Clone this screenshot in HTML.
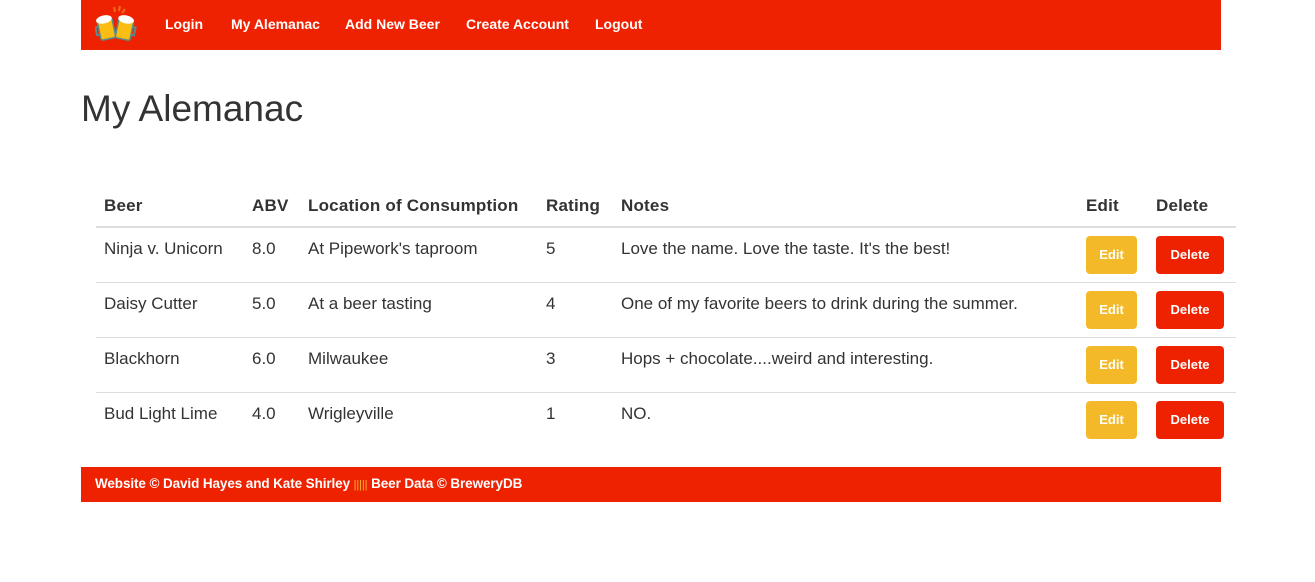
<!DOCTYPE html>
<html><head><meta charset="utf-8"><style>
*{margin:0;padding:0;box-sizing:border-box}
body{width:1315px;height:582px;background:#fff;font-family:"Liberation Sans","DejaVu Sans",sans-serif;color:#333;position:relative;overflow:hidden}
.nav{position:absolute;left:81px;top:0;width:1140px;height:50px;background:#ee2201}
.nav a{position:absolute;top:16px;color:#fff;font-size:14px;font-weight:bold;text-decoration:none}
h1{position:absolute;left:81px;top:88px;font-size:37px;font-weight:normal;color:#333}
.t{position:absolute;font-size:17px;white-space:nowrap}
.b{font-weight:bold;letter-spacing:0.2px}
.line{position:absolute;left:96px;width:1140px;height:1px;background:#ddd}
.btn{position:absolute;height:38px;border-radius:4px;color:#fff;font-size:13px;font-weight:bold;text-align:center;line-height:38px}
.e{background:#f3b929;left:1086px;width:51px}
.d{background:#ee2201;left:1156px;width:68px}
.foot{position:absolute;left:81px;top:467px;width:1140px;height:35px;background:#ee2201;color:#fff;font-size:13.5px;font-weight:bold;padding:9px 0 0 14px;letter-spacing:-0.1px}
</style></head><body>
<div class="nav">
<svg style="position:absolute;left:14px;top:5px" width="42" height="38" viewBox="0 0 42 38">
<g stroke="#f06a1a" stroke-width="2"><line x1="19" y1="2" x2="20" y2="7"/><line x1="25" y1="1" x2="24" y2="6"/><line x1="30" y1="4" x2="27" y2="8"/></g>
<g transform="rotate(-12 12 24)"><rect x="4" y="14" width="15" height="20" rx="2" fill="#fbbd12" stroke="#5a8a8a" stroke-width="1.5"/><ellipse cx="11" cy="14" rx="8" ry="4" fill="#fff"/><path d="M4 20 h-3 v8 h3" fill="none" stroke="#5a8a8a" stroke-width="2"/></g>
<g transform="rotate(12 28 24)"><rect x="22" y="14" width="15" height="20" rx="2" fill="#fbbd12" stroke="#5a8a8a" stroke-width="1.5"/><ellipse cx="29" cy="14" rx="8" ry="4" fill="#fff"/><path d="M37 20 h3 v8 h-3" fill="none" stroke="#5a8a8a" stroke-width="2"/></g>
</svg>
<a style="left:84px">Login</a>
<a style="left:150px">My Alemanac</a>
<a style="left:264px">Add New Beer</a>
<a style="left:385px">Create Account</a>
<a style="left:514px">Logout</a>
</div>
<h1>My Alemanac</h1>
<div class="t b" style="left:104px;top:196px">Beer</div>
<div class="t b" style="left:252px;top:196px">ABV</div>
<div class="t b" style="left:308px;top:196px">Location of Consumption</div>
<div class="t b" style="left:546px;top:196px">Rating</div>
<div class="t b" style="left:621px;top:196px">Notes</div>
<div class="t b" style="left:1086px;top:196px">Edit</div>
<div class="t b" style="left:1156px;top:196px">Delete</div>
<div class="line" style="top:226px;height:2px"></div>

<div class="t" style="left:104px;top:239px">Ninja v. Unicorn</div>
<div class="t" style="left:252px;top:239px">8.0</div>
<div class="t" style="left:308px;top:239px">At Pipework's taproom</div>
<div class="t" style="left:546px;top:239px">5</div>
<div class="t" style="left:621px;top:239px">Love the name. Love the taste. It's the best!</div>
<div class="btn e" style="top:236px">Edit</div><div class="btn d" style="top:236px">Delete</div>
<div class="line" style="top:282px"></div>

<div class="t" style="left:104px;top:294px">Daisy Cutter</div>
<div class="t" style="left:252px;top:294px">5.0</div>
<div class="t" style="left:308px;top:294px">At a beer tasting</div>
<div class="t" style="left:546px;top:294px">4</div>
<div class="t" style="left:621px;top:294px">One of my favorite beers to drink during the summer.</div>
<div class="btn e" style="top:291px">Edit</div><div class="btn d" style="top:291px">Delete</div>
<div class="line" style="top:337px"></div>

<div class="t" style="left:104px;top:349px">Blackhorn</div>
<div class="t" style="left:252px;top:349px">6.0</div>
<div class="t" style="left:308px;top:349px">Milwaukee</div>
<div class="t" style="left:546px;top:349px">3</div>
<div class="t" style="left:621px;top:349px">Hops + chocolate....weird and interesting.</div>
<div class="btn e" style="top:346px">Edit</div><div class="btn d" style="top:346px">Delete</div>
<div class="line" style="top:392px"></div>

<div class="t" style="left:104px;top:404px">Bud Light Lime</div>
<div class="t" style="left:252px;top:404px">4.0</div>
<div class="t" style="left:308px;top:404px">Wrigleyville</div>
<div class="t" style="left:546px;top:404px">1</div>
<div class="t" style="left:621px;top:404px">NO.</div>
<div class="btn e" style="top:401px">Edit</div><div class="btn d" style="top:401px">Delete</div>

<div class="foot">Website © David Hayes and Kate Shirley <span style="color:#f3b929;font-weight:normal;font-size:11px">|||||</span> Beer Data © BreweryDB</div>
</body></html>
